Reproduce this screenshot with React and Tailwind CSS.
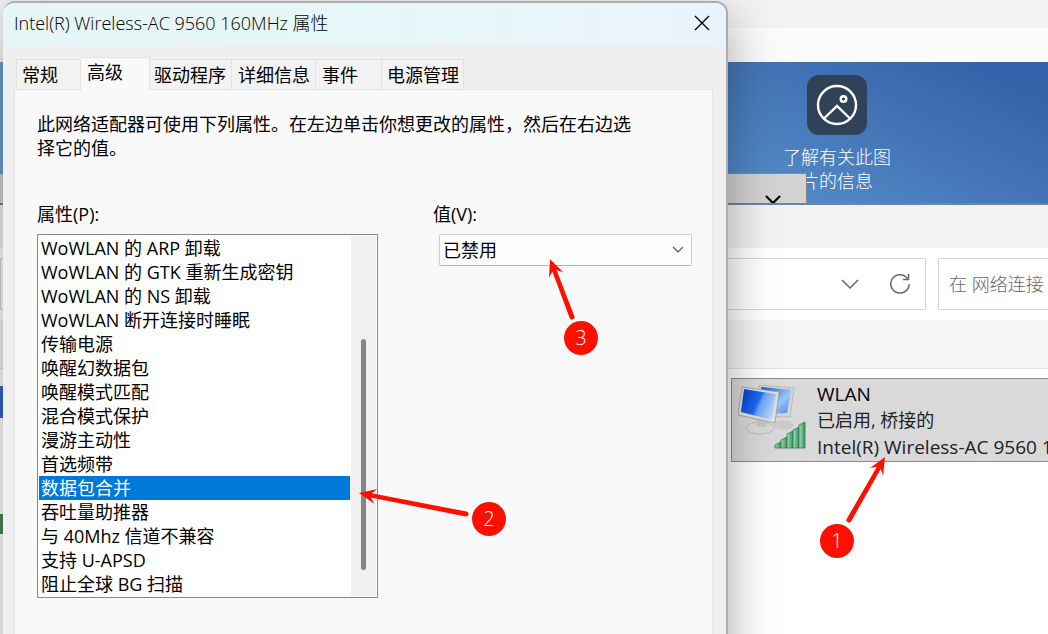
import React, { useState } from 'react';

const TABS = [
  { name: '常规', className: 'w-[65px] pl-[5px]' },
  { name: '高级', className: 'w-[69px] pl-[6px]' },
  { name: '驱动程序', className: 'w-[82px] pl-1' },
  { name: '详细信息', className: 'w-[84px] pl-[6px]' },
  { name: '事件', className: 'w-[66px] pl-[6px]' },
  { name: '电源管理', className: 'w-[82px] pl-[5px]' },
];

const PROPERTIES = [
  'WoWLAN 的 ARP 卸载',
  'WoWLAN 的 GTK 重新生成密钥',
  'WoWLAN 的 NS 卸载',
  'WoWLAN 断开连接时睡眠',
  '传输电源',
  '唤醒幻数据包',
  '唤醒模式匹配',
  '混合模式保护',
  '漫游主动性',
  '首选频带',
  '数据包合并',
  '吞吐量助推器',
  '与 40Mhz 信道不兼容',
  '支持 U-APSD',
  '阻止全球 BG 扫描',
];

const ARROWS = [
  { from: [849, 520], to: [885, 457] },
  { from: [466, 514], to: [359, 493] },
  { from: [572, 317], to: [550, 259] },
];

const Arrow = ({ from, to }) => {
  const dx = to[0] - from[0];
  const dy = to[1] - from[1];
  const length = Math.hypot(dx, dy);
  const angle = (Math.atan2(dy, dx) * 180) / Math.PI;

  return (
    <g transform={`translate(${to[0]} ${to[1]}) rotate(${angle})`}>
      <path d={`M0 0 L-17 -7.5 L-12.5 -2.2 L${-length} -2.5 A2.5 2.5 0 0 0 ${-length} 2.5 L-12.5 2.2 L-17 7.5 Z`} />
    </g>
  );
};

const Badge = ({ className, children }) => (
  <span
    className={`absolute flex size-[34px] items-center justify-center rounded-full bg-[#ff0f00] text-xl font-light text-white ${className}`}
  >
    {children}
  </span>
);

const PictureIcon = () => (
  <svg viewBox="0 0 60 60" className="size-15" fill="none" stroke="white" strokeWidth="2.4">
    <rect width="60" height="60" rx="12" fill="#2f4258" stroke="none" />
    <circle cx="30" cy="30" r="19" />
    <circle cx="36.5" cy="24" r="2.8" />
    <path d="M17 43.5 L30 31 L43 43.5" />
  </svg>
);

const NetworkIcon = () => (
  <svg viewBox="0 0 72 68" className="h-[68px] w-[72px] shrink-0">
    <defs>
      <linearGradient id="screen" x1="0" y1="0.3" x2="1" y2="0.7">
        <stop offset="0" stopColor="#0a45d8" />
        <stop offset="0.45" stopColor="#1a6cf0" />
        <stop offset="0.55" stopColor="#6aa5f6" />
        <stop offset="1" stopColor="#c3def9" />
      </linearGradient>
      <linearGradient id="back" x1="0" y1="0" x2="1" y2="1">
        <stop offset="0" stopColor="#0c56dc" />
        <stop offset="0.6" stopColor="#9cc5f8" />
        <stop offset="1" stopColor="#3b86ee" />
      </linearGradient>
      <linearGradient id="signal" x1="0" y1="0" x2="1" y2="0">
        <stop offset="0" stopColor="#a9dcb9" />
        <stop offset="1" stopColor="#35905a" />
      </linearGradient>
    </defs>
    <ellipse cx="46" cy="40" rx="10" ry="5" fill="#cbcbcb" />
    <path d="M21 0 L56 3 L52 32 L28 32 Z" fill="#d7d4cd" stroke="#aaa" strokeWidth="0.7" />
    <path d="M23 2 L53 5 L49 28 L30 29 Z" fill="url(#back)" />
    <ellipse cx="22" cy="43" rx="14" ry="6" fill="#d9d9d9" stroke="#bcbcbc" />
    <path d="M17 31 L31 34 L28 42 L19 42 Z" fill="#c6c6c6" />
    <path d="M4 2 L41 7 L37 38 L0 30 Z" fill="#e5e2dc" stroke="#999" strokeWidth="0.8" />
    <path d="M6 4 L38 9 L34 35 L3 27 Z" fill="url(#screen)" />
    <g fill="url(#signal)" stroke="#2c7f4d" strokeWidth="0.8">
      <path d="M37 63 V60 L43 57 V63 Z" />
      <path d="M43 63 V55 L49 52 V63 Z" />
      <path d="M49 63 V49 L55 46 V63 Z" />
      <path d="M55 63 V45 L61 42 V63 Z" />
      <path d="M61 63 V40 L67 37 V63 Z" />
    </g>
  </svg>
);

// Explorer window behind the dialog
const ConnectionsWindow = () => (
  <div className="flex min-h-screen flex-col bg-white">
    <div className="h-7 bg-[#f3f3f3]" />
    <div className="h-[34px] bg-[#fbfbfb]" />

    <div className="relative flex h-[143px] flex-col overflow-hidden border-b-2 border-[#72839c] bg-[linear-gradient(25deg,#6f9fd3_30%,#5186c4_62%,#3562a8_95%)] pl-[727px]">
      <button className="flex w-[220px] flex-col items-center gap-[10px] pt-[13px] text-lg leading-6 font-light text-white">
        <PictureIcon />
        <span>
          了解有关此图
          <br />
          片的信息
        </span>
      </button>
      <div className="absolute bottom-0 left-0 flex h-[30px] w-[807px] justify-end overflow-hidden border-t border-r border-[#888] bg-[#d3d3d3] pt-[21px] pr-[25px]">
        <svg viewBox="0 0 16 16" className="size-4" fill="none" stroke="black" strokeWidth="2.2">
          <path d="M1 1 L8 8 L15 1" />
        </svg>
      </div>
    </div>

    <div className="h-[43px] bg-[#f2f2f2]" />

    <div className="flex gap-3 py-[10px] text-[#666]">
      <div className="flex h-[52px] w-[926px] shrink-0 items-center justify-end gap-[30px] border border-[#d6d6d6] pr-[14px]">
        <svg viewBox="0 0 18 12" className="h-3 w-[18px]" fill="none" stroke="currentColor" strokeWidth="1.5">
          <path d="M1 2 L9 10 L17 2" />
        </svg>
        <svg viewBox="0 0 22 22" className="size-[22px]" fill="none" stroke="currentColor" strokeWidth="1.5">
          <path d="M18.5 5.5 A9.2 9.2 0 1 0 20.2 11" />
          <path d="M19.5 1 V6.5 H14" />
        </svg>
      </div>
      <input
        type="text"
        aria-label="搜索"
        placeholder="在 网络连接 中搜索"
        className="h-[52px] min-w-0 flex-1 border border-r-0 border-[#d6d6d6] pl-[10px] text-lg font-light outline-none placeholder:text-[#666]"
      />
    </div>

    <div className="h-[49px] border-b border-[#e4e4e4] bg-[#f3f5f7]" />

    <div className="flex pt-[9px]">
      <div className="w-[731px] shrink-0">
        <div className="mt-2 h-8 w-1 bg-[#3568cf]" />
        <div className="mt-24 h-5 w-1 bg-[#4b8a57]" />
      </div>
      <button className="flex h-[84px] flex-1 gap-[7px] overflow-hidden border border-r-0 border-[#8c8c8c] bg-[#d9d9d9] pt-[6px] pl-[6px] text-left leading-[26px] whitespace-nowrap text-[#222]">
        <NetworkIcon />
        <span className="-mt-1 text-[19px]">
          <span className="block text-black">WLAN</span>
          <span className="block text-lg leading-[27px]">已启用, 桥接的</span>
          <span className="block">Intel(R) Wireless-AC 9560 160MHz</span>
        </span>
      </button>
    </div>
  </div>
);

const PropertiesDialog = () => {
  const [activeTab, setActiveTab] = useState('高级');
  const [selected, setSelected] = useState('数据包合并');

  return (
    <div
      role="dialog"
      aria-labelledby="dialog-title"
      className="absolute top-px -bottom-12 left-[3px] flex w-[725px] flex-col overflow-hidden rounded-xl border-2 border-l-0 border-[#adadad] bg-[#efefef] shadow-[0_16px_50px_rgba(0,0,0,0.35)]"
    >
      <div className="flex h-[42px] shrink-0 items-center justify-between bg-linear-to-r from-[#e6f5f7] via-[#e6f7f8] to-[#eaf3fc] pr-4 pb-[3px] pl-[11px]">
        <h1 id="dialog-title" className="text-lg font-light text-black">
          Intel(R) Wireless-AC 9560 160MHz 属性
        </h1>
        <button aria-label="关闭">
          <svg viewBox="0 0 16 16" className="size-4" stroke="black" strokeWidth="1.4">
            <path d="M1 1 L15 15 M15 1 L1 15" />
          </svg>
        </button>
      </div>

      <div role="tablist" className="z-10 mt-3 -mb-px flex h-[33px] shrink-0 items-end pl-[13px]">
        {TABS.map((tab) => (
          <button
            key={tab.name}
            role="tab"
            aria-selected={tab.name === activeTab}
            onClick={() => setActiveTab(tab.name)}
            className={`shrink-0 border-t border-r border-[#e2e2e2] text-left whitespace-nowrap first:border-l ${tab.className} ${
              tab.name === activeTab ? 'h-[33px] bg-[#f9f9f9] pb-1' : 'h-[31px] border-b bg-[#f2f2f2]'
            }`}
          >
            {tab.name}
          </button>
        ))}
      </div>

      <div className="mr-[13px] ml-[11px] flex-1 border border-[#e5e5e5] bg-[#f9f9f9] px-[22px] pt-[22px]">
        <p className="max-w-[600px] leading-6">
          此网络适配器可使用下列属性。在左边单击你想更改的属性，然后在右边选择它的值。
        </p>

        <div className="mt-[42px] flex gap-[55px]">
          <div>
            <span id="properties-label" className="block h-8 leading-6">
              属性(P):
            </span>
            <div className="flex h-[364px] w-[341px] border border-[#828790] bg-white p-px">
              <div role="listbox" aria-labelledby="properties-label" className="flex-1">
                {PROPERTIES.map((name) => (
                  <button
                    key={name}
                    role="option"
                    aria-selected={name === selected}
                    onClick={() => setSelected(name)}
                    className={`block h-6 w-full pl-[2px] text-left leading-6 whitespace-nowrap ${
                      name === selected ? 'bg-[#0078d7] text-white' : ''
                    }`}
                  >
                    {name}
                  </button>
                ))}
              </div>
              <div className="ml-px w-[25px] bg-[#f0f0f0] pt-[103px] pl-[10px]">
                <div className="h-[231px] w-[5px] rounded-full bg-[#868686]" />
              </div>
            </div>
          </div>

          <div className="flex-1">
            <label htmlFor="value" className="block h-8 leading-6">
              值(V):
            </label>
            <div className="relative ml-[6px] w-[253px]">
              <select
                id="value"
                defaultValue="已禁用"
                className="h-8 w-full appearance-none rounded-xs border border-[#cfcfcf] border-b-[#b5b5b5] bg-[#fdfdfd] pl-[3px] outline-none"
              >
                <option>已禁用</option>
                <option>已启用</option>
              </select>
              <svg
                viewBox="0 0 12 8"
                className="pointer-events-none absolute top-3 right-2 h-2 w-3"
                fill="none"
                stroke="#555"
                strokeWidth="1.2"
              >
                <path d="M1 1 L6 6 L11 1" />
              </svg>
            </div>
          </div>
        </div>
      </div>
    </div>
  );
};

const App = () => {
  return (
    <div className="relative h-screen overflow-hidden font-['Open_Sans','Noto_Sans_CJK_SC',sans-serif] text-lg text-black">
      <ConnectionsWindow />
      <PropertiesDialog />

      <svg className="pointer-events-none absolute inset-0 h-full w-full" fill="#ff0f00">
        {ARROWS.map((arrow, i) => (
          <Arrow key={i} {...arrow} />
        ))}
      </svg>
      <Badge className="top-[524px] left-[820px]">1</Badge>
      <Badge className="top-[502px] left-[472px]">2</Badge>
      <Badge className="top-[321px] left-[564px]">3</Badge>
    </div>
  );
};

export default App;
